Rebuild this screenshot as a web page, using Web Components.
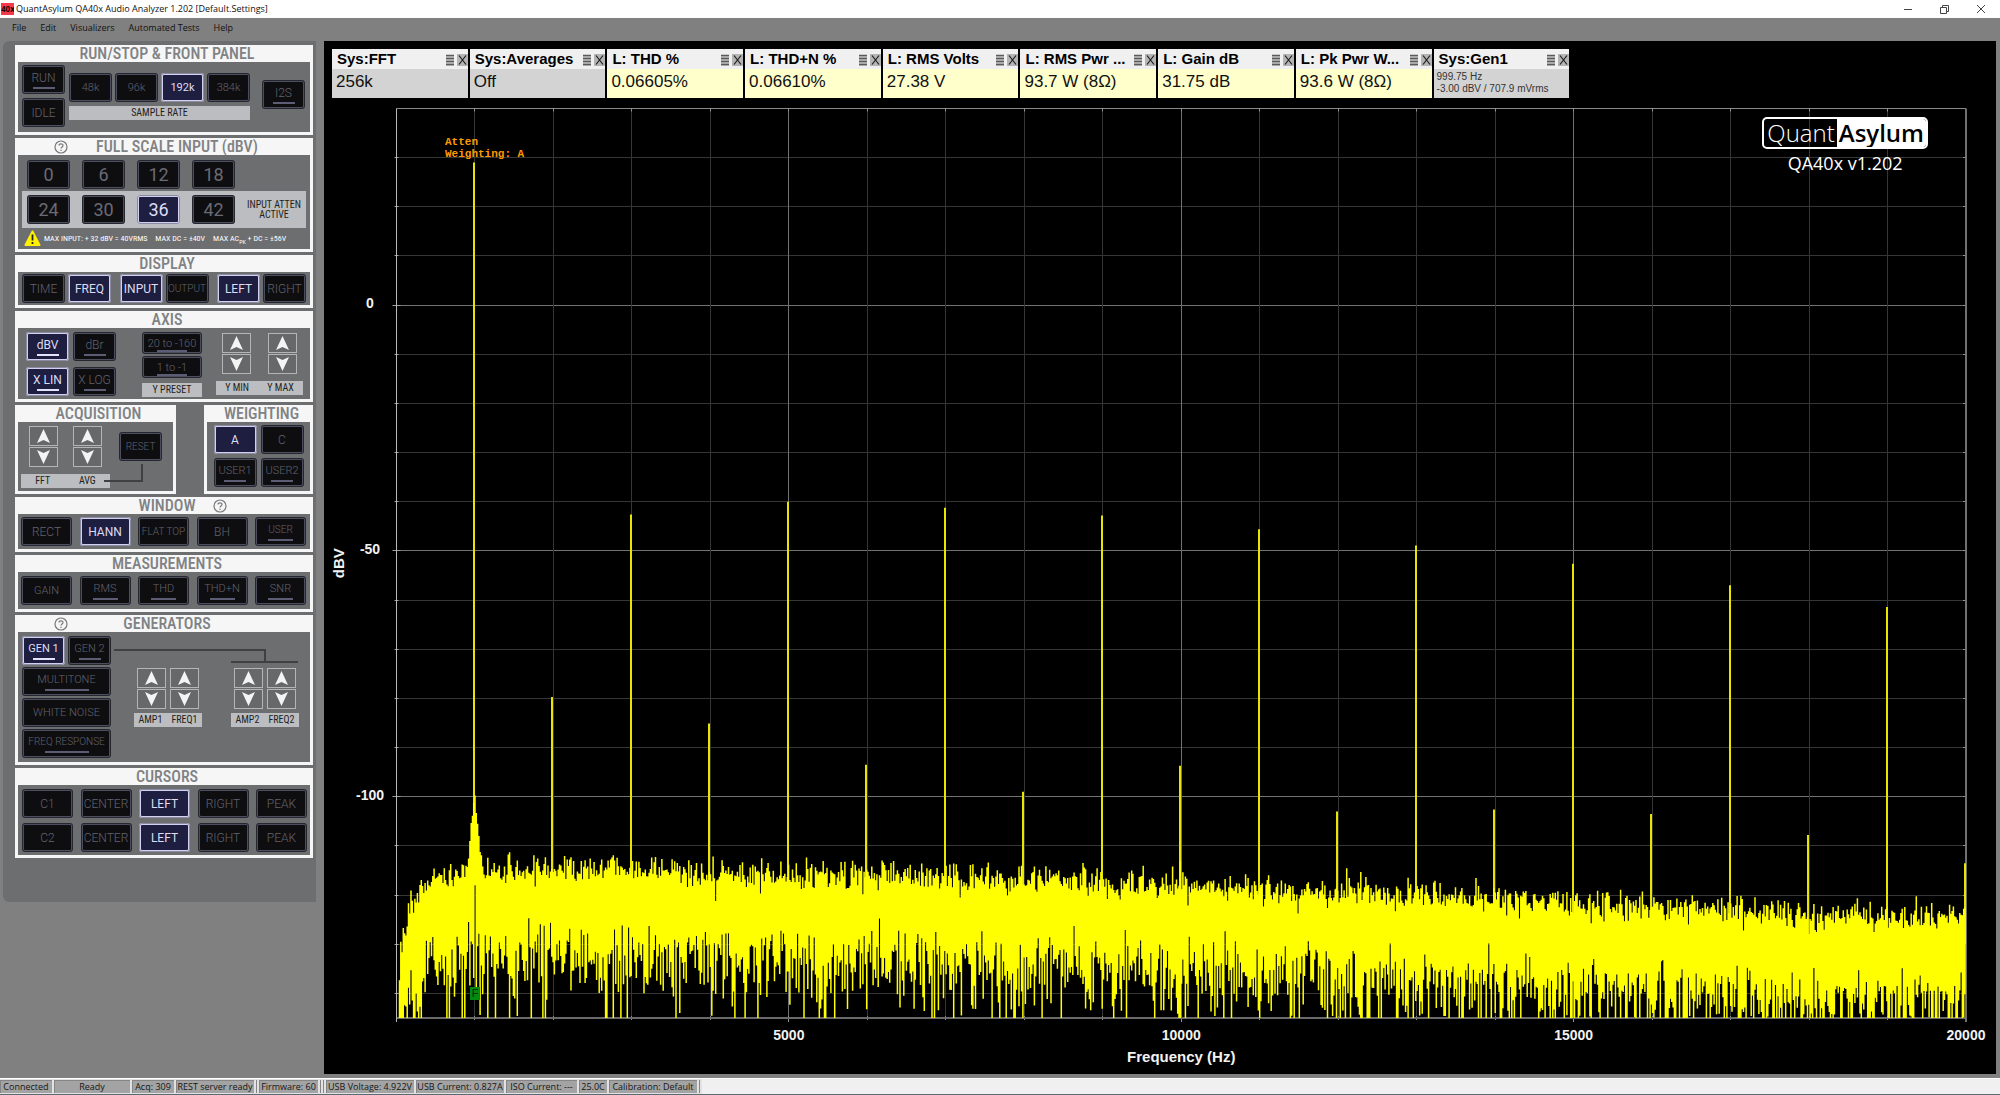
<!DOCTYPE html>
<html lang="en">
<head>
<meta charset="utf-8">
<title>QuantAsylum QA40x Audio Analyzer</title>
<style>
  html, body { margin: 0; height: 100%; background: #808080; }
  body { font-family: "Open Sans", "Noto Sans", sans-serif; color: #111; }
</style>
</head>
<body>
<qa-app></qa-app>

<script>
const NARROW = '"Liberation Sans Narrow", "Roboto Condensed", "Open Sans Condensed", "DejaVu Sans Condensed", sans-serif';

class Base extends HTMLElement {
  connectedCallback() {
    if (this.shadowRoot) return;
    this.attachShadow({ mode: 'open' }).innerHTML = this.view();
    this.ready();
  }
  ready() {}
  get(name, fallback = '') { return this.getAttribute(name) ?? fallback; }
}

/* A backlit front panel key */
customElements.define('qa-key', class extends Base {
  view() {
    return `<style>
      :host { display: block; flex: none; width: 43px; height: 29px; }
      :host([wide]) { width: 51px; }
      :host([full]) { width: 89px; }
      :host([flat]) { width: 60px; height: 22px; }
      button { box-sizing: border-box; width: 100%; height: 100%; padding: 0; margin: 0;
        display: flex; flex-direction: column; align-items: center; justify-content: center; gap: 2px;
        border: 2px solid #4d4d60; border-radius: 3px; outline: 1px solid #26262f; outline-offset: -1px;
        background: #0e0e10; color: #62626e; white-space: nowrap;
        font: 300 12px/14px Roboto, sans-serif; }
      :host([size="s"]) button { font-size: 10px; }
      :host([size="m"]) button { font-size: 11px; }
      :host([size="l"]) button { font-size: 18px; line-height: 20px; color: #6a6a74; font-weight: 400; }
      :host([flat]) button { gap: 0; font-size: 11px; line-height: 13px; justify-content: flex-end; }
      i { width: 22px; height: 2px; background: #5c5c74; }
      :host([wide]) i { width: 25px; }
      :host([full]) i { width: 44px; }
      :host([flat]) i { width: 30px; }
      :host([on]) button { background: #1e1e40; color: #dcdcf4; border-color: #d3d0f2; outline-color: #8a8aa0; font-weight: 400; }
      :host([on]) i { background: #e4e2fb; }
    </style><button type="button" aria-pressed="${this.hasAttribute('on')}"><slot></slot>${this.hasAttribute('bar') ? '<i></i>' : ''}</button>`;
  }
});

/* Up / down stepper */
customElements.define('qa-step', class extends Base {
  view() {
    return `<style>
      :host { display: flex; flex: none; flex-direction: column; gap: 1px; width: 29px; }
      button { box-sizing: border-box; height: 20px; padding: 0; border: 1px solid #b4b5b7; background: #67686a; display: grid; place-items: center; }
      svg { display: block; }
    </style>
    <button type="button" aria-label="${this.get('name')} up"><svg width="13" height="14" viewBox="0 0 13 14"><path d="M6.5 0 13 14 6.5 11 0 14Z" fill="#f4f4f4"/></svg></button>
    <button type="button" aria-label="${this.get('name')} down"><svg width="13" height="14" viewBox="0 0 13 14"><path d="M6.5 14 13 0 6.5 3 0 0Z" fill="#f4f4f4"/></svg></button>`;
  }
});

/* Grey caption under a group of keys */
customElements.define('qa-strip', class extends Base {
  view() {
    return `<style>
      :host { display: flex; flex: none; justify-content: space-around; align-items: center; height: 14px; background: #bcbdc0;
        color: #1f1f21; font: 10px/14px ${NARROW}; white-space: nowrap; }
    </style><slot></slot>`;
  }
});

/* Framed module with a heading */
customElements.define('qa-panel', class extends Base {
  view() {
    const mark = '<button type="button" aria-label="Help"><svg width="14" height="14" viewBox="0 0 14 14" fill="none" stroke="#77787b" stroke-width="1.2"><circle cx="7" cy="7" r="6"/><path d="M5 5.6C5 3.2 9 3.2 9 5.5 9 7 7 7 7 8.6M7 9.8V11"/></svg></button>';
    const help = this.get('help');
    return `<style>
      :host { display: block; border: solid #f6f6f6; border-width: 0 3px 3px; background: #6d6e70; }
      header { display: grid; grid-template-columns: 1fr auto 1fr; align-items: center; height: 17px; background: #f6f6f6; }
      h2 { grid-column: 2; grid-row: 1; margin: 0; padding-left: 6px; font: 500 16px/17px ${NARROW}; color: #808285; white-space: nowrap; }
      :host([offset]) h2 { padding-left: 26px; }
      button { grid-row: 1; padding: 0; border: 0; background: none; height: 14px; width: 14px; }
      .before { grid-column: 1; margin-left: 36px; }
      .after { grid-column: 3; margin-left: 18px; }
      button svg { display: block; }
    </style>
    <header>${help ? mark.replace('<button', `<button class="${help}"`) : ''}<h2>${this.get('heading').replace('&', '&amp;')}</h2></header>
    <slot></slot>`;
  }
});

/* Left hand control column */
customElements.define('qa-controls', class extends Base {
  view() {
    return `<style>
      :host { box-sizing: border-box; display: flex; flex: none; flex-direction: column; gap: 3px; align-self: flex-start; width: 313px;
        padding: 4px 3px 44px 12px; background: #6d6e70; border-radius: 6px 0 0 6px; }
      .row { display: flex; }
      .col { display: flex; flex-direction: column; }
      .g3 { gap: 3px; } .g4 { gap: 4px; } .g12 { gap: 12px; }
      .between { justify-content: space-between; }
      .run { padding: 3px 5px 5px 4px; align-items: flex-start; gap: 4px; }
      .rates { padding-top: 8px; gap: 4px; }
      .i2s { margin-left: auto; padding-top: 15px; }
      .scale1 { padding: 5px 9px 2px; }
      .scale2 { margin: 0 4px; padding: 4px 5px; background: #bcbdc0; align-items: center; }
      .scale2 p { flex: 1; margin: 0; text-align: center; white-space: nowrap; font: 10px/10px ${NARROW}; color: #1f1f21; }
      .warn { align-items: center; gap: 3px; height: 21px; padding: 0 6px; color: #fff; font: 8px/10px ${NARROW}; white-space: nowrap; }
      .warn span { margin-right: 5px; }
      .warn small { font-size: 6px; vertical-align: sub; line-height: 1px; }
      .display { padding: 2px 4px 2px; }
      .axis { padding: 4px 7px 2px 8px; }
      .axis .keys { display: grid; grid-template-columns: 43px 43px; gap: 5px 4px; }
      .axis .preset { width: 60px; margin-left: 26px; gap: 2px; }
      .axis .range { width: 88px; margin-left: 14px; }
      .steps { justify-content: space-between; }
      .axis .steps { padding: 1px 6px 7px; }
      .axis .preset qa-strip { margin-top: 3px; }
      .pair { justify-content: space-between; }
      .pair > * { box-sizing: border-box; width: 161px; }
      .pair > :last-child { width: 109px; }
      .acq { padding: 4px 11px 3px 3px; align-items: flex-start; }
      .acq .left { width: 89px; }
      .acq .steps { padding: 0 8px 7px; }
      .acq .reset { flex: 1; align-items: flex-end; padding-top: 6px; }
      .acq svg { align-self: flex-start; display: block; margin-left: -6px; }
      .weight { display: grid; grid-template-columns: 43px 43px; justify-content: center; gap: 4px; padding: 3px 0 4px; }
      .window { padding: 3px 4px 3px 3px; }
      .measure { padding: 4px 4px 4px 3px; }
      .gen { padding: 4px 0 4px 4px; align-items: flex-start; }
      .gen .left { gap: 2px; width: 89px; }
      .gen .right { flex: 1; }
      .gen .right svg { display: block; }
      .pairs { gap: 29px; padding: 0 0 0 23px; }
      .pairs .steps { padding: 0 3px 4px; }
      .pairs .col { width: 68px; }
      .cursor { padding: 4px 3px 3px 4px; gap: 5px; }
    </style>
    <qa-panel heading="RUN/STOP & FRONT PANEL">
      <div class="row run">
        <div class="col g4"><qa-key bar>RUN</qa-key><qa-key>IDLE</qa-key></div>
        <div class="col rates">
          <div class="row g3"><qa-key size="m">48k</qa-key><qa-key size="m">96k</qa-key><qa-key size="m" on>192k</qa-key><qa-key size="m">384k</qa-key></div>
          <qa-strip>SAMPLE RATE</qa-strip>
        </div>
        <div class="i2s"><qa-key bar>I2S</qa-key></div>
      </div>
    </qa-panel>
    <qa-panel heading="FULL SCALE INPUT (dBV)" help="before" offset>
      <div class="row g12 scale1"><qa-key size="l">0</qa-key><qa-key size="l">6</qa-key><qa-key size="l">12</qa-key><qa-key size="l">18</qa-key></div>
      <div class="row g12 scale2"><qa-key size="l">24</qa-key><qa-key size="l">30</qa-key><qa-key size="l" on>36</qa-key><qa-key size="l">42</qa-key><p>INPUT ATTEN<br>ACTIVE</p></div>
      <div class="row warn">
        <svg width="17" height="17" viewBox="0 0 17 17"><path d="M8.5 1.5 15.5 15H1.5Z" fill="#fff200" stroke="#fff200" stroke-width="2" stroke-linejoin="round"/><path d="M8.5 4.5V10.5M8.5 12V14" stroke="#222" stroke-width="1.8"/></svg>
        <span>MAX INPUT: + 32 dBV = 40VRMS</span><span>MAX DC = ±40V</span><span>MAX AC<small>PK</small> + DC = ±56V</span>
      </div>
    </qa-panel>
    <qa-panel heading="DISPLAY">
      <div class="row between display">
        <div class="row g3"><qa-key>TIME</qa-key><qa-key on>FREQ</qa-key></div>
        <div class="row g3"><qa-key on>INPUT</qa-key><qa-key size="s">OUTPUT</qa-key></div>
        <div class="row g3"><qa-key on>LEFT</qa-key><qa-key>RIGHT</qa-key></div>
      </div>
    </qa-panel>
    <qa-panel heading="AXIS">
      <div class="row axis">
        <div class="keys"><qa-key bar on>dBV</qa-key><qa-key bar>dBr</qa-key><qa-key bar on>X LIN</qa-key><qa-key bar>X LOG</qa-key></div>
        <div class="col preset"><qa-key flat bar>20 to -160</qa-key><qa-key flat bar>1 to -1</qa-key><qa-strip>Y PRESET</qa-strip></div>
        <div class="col range">
          <div class="row steps"><qa-step name="Y min"></qa-step><qa-step name="Y max"></qa-step></div>
          <qa-strip><span>Y MIN</span><span>Y MAX</span></qa-strip>
        </div>
      </div>
    </qa-panel>
    <div class="row pair">
      <qa-panel heading="ACQUISITION">
        <div class="row acq">
          <div class="col left">
            <div class="row steps"><qa-step name="FFT"></qa-step><qa-step name="Average"></qa-step></div>
            <qa-strip><span>FFT</span><span>AVG</span></qa-strip>
          </div>
          <div class="col reset"><qa-key size="s">RESET</qa-key>
            <svg width="40" height="24" viewBox="0 0 40 24" fill="none" stroke="#3f4042" stroke-width="2"><path d="M0 20H38V3"/></svg></div>
        </div>
      </qa-panel>
      <qa-panel heading="WEIGHTING">
        <div class="weight"><qa-key on>A</qa-key><qa-key>C</qa-key><qa-key size="m" bar>USER1</qa-key><qa-key size="m" bar>USER2</qa-key></div>
      </qa-panel>
    </div>
    <qa-panel heading="WINDOW" help="after">
      <div class="row between window"><qa-key wide>RECT</qa-key><qa-key wide on>HANN</qa-key><qa-key wide size="s">FLAT TOP</qa-key><qa-key wide>BH</qa-key><qa-key wide size="s" bar>USER</qa-key></div>
    </qa-panel>
    <qa-panel heading="MEASUREMENTS">
      <div class="row between measure"><qa-key wide size="m">GAIN</qa-key><qa-key wide size="m" bar>RMS</qa-key><qa-key wide size="m" bar>THD</qa-key><qa-key wide size="m" bar>THD+N</qa-key><qa-key wide size="m" bar>SNR</qa-key></div>
    </qa-panel>
    <qa-panel heading="GENERATORS" help="before">
      <div class="row gen">
        <div class="col left">
          <div class="row g3"><qa-key size="m" bar on>GEN 1</qa-key><qa-key size="m" bar>GEN 2</qa-key></div>
          <qa-key full size="m" bar>MULTITONE</qa-key><qa-key full size="m">WHITE NOISE</qa-key><qa-key full size="s" bar>FREQ RESPONSE</qa-key>
        </div>
        <div class="col right">
          <svg width="190" height="32" viewBox="0 0 190 32" fill="none" stroke="#3f4042" stroke-width="2"><path d="M3 14H154V26M120 26H187"/></svg>
          <div class="row pairs">
            <div class="col"><div class="row steps"><qa-step name="Amp 1"></qa-step><qa-step name="Freq 1"></qa-step></div><qa-strip><span>AMP1</span><span>FREQ1</span></qa-strip></div>
            <div class="col"><div class="row steps"><qa-step name="Amp 2"></qa-step><qa-step name="Freq 2"></qa-step></div><qa-strip><span>AMP2</span><span>FREQ2</span></qa-strip></div>
          </div>
        </div>
      </div>
    </qa-panel>
    <qa-panel heading="CURSORS">
      <div class="col cursor">
        <div class="row between"><qa-key wide>C1</qa-key><qa-key wide>CENTER</qa-key><qa-key wide on>LEFT</qa-key><qa-key wide>RIGHT</qa-key><qa-key wide>PEAK</qa-key></div>
        <div class="row between"><qa-key wide>C2</qa-key><qa-key wide>CENTER</qa-key><qa-key wide on>LEFT</qa-key><qa-key wide>RIGHT</qa-key><qa-key wide>PEAK</qa-key></div>
      </div>
    </qa-panel>`;
  }
});

/* Readout card */
customElements.define('qa-meter', class extends Base {
  view() {
    return `<style>
      :host { display: flex; flex-direction: column; height: 49px; min-width: 0; background: #ffffcc; color: #111; font: 17px/24px "Liberation Sans", sans-serif; white-space: nowrap; }
      :host([sys]) { background: #d3d3d3; }
      :host([small]) { font-size: 10px; line-height: 12px; color: #333; }
      header { display: flex; align-items: center; height: 20px; padding-left: 5px; background: #f0f0f0; gap: 1px; }
      h3 { flex: 1; margin: 0; font: bold 15px/20px "Liberation Sans", sans-serif; color: #000; }
      button { box-sizing: border-box; flex: none; width: 11px; height: 13px; padding: 0; border: 0; background: none; }
      button svg { display: block; }
      div { padding: 1px 4px; }
      :host([small]) div { padding: 2px 3px; }
    </style>
    <header><h3>${this.get('name')}</h3>
      <button type="button" aria-label="Menu"><svg width="11" height="13" viewBox="0 0 11 13"><path fill="#c4c4c4" d="M1 2H9V13H1Z"/><path d="M1 2.5H9M1 5.5H9M1 8.5H9M1 11.5H9" stroke="#5a5a5a" stroke-width="1.4"/></svg></button>
      <button type="button" aria-label="Close"><svg width="11" height="13" viewBox="0 0 11 13"><path fill="#b4b4b4" d="M0 1H11V13H0Z"/><path d="M2 2.5 9 11.5M9 2.5 2 11.5" stroke="#1c1c1c" stroke-width="1.2"/></svg></button></header>
    <div><slot></slot></div>`;
  }
});

customElements.define('qa-logo', class extends Base {
  view() {
    return `<style>
      :host { display: flex; flex-direction: column; align-items: center; color: #fff; font: 18px/24px "Open Sans", sans-serif; }
      .mark { display: flex; border: 2px solid #fff; border-radius: 5px; overflow: hidden; font-size: 24px; line-height: 28px; margin-bottom: 2px; }
      .mark span { padding: 0 2px 0 3px; font-weight: 300; }
      .mark b { padding: 0 2px; background: #fff; color: #000; font-weight: 600; }
    </style><div class="mark"><span>Quant</span><b>Asylum</b></div><div><slot></slot></div>`;
  }
});

/* Spectrum plot: grid, harmonics and noise floor */
customElements.define('qa-spectrum', class extends Base {
  view() {
    return `<style>
      :host { display: block; min-height: 0; overflow: hidden; }
      svg { display: block; width: 100%; height: 100%; }
      text { fill: #f2f2f2; font: bold 14px "Liberation Sans", sans-serif; text-anchor: middle; }
      .name { font-size: 15px; }
      .note { fill: #ff9900; font: bold 11px "Liberation Mono", monospace; text-anchor: start; }
      .flag { fill: #002800; font-weight: normal; font-size: 11px; }
    </style><svg role="img" aria-label="Spectrum"></svg>`;
  }
  ready() {
    this.draw();
    new ResizeObserver(() => this.draw()).observe(this);
  }
  draw() {
    const w = this.clientWidth, h = this.clientHeight;
    if (!w || !h) return;
    const L = 72.5, T = 10.5, R = w - 30, B = h - 56;
    const X = f => L + f / 20000 * (R - L);
    const Y = d => T + (40 - d) / 185 * (B - T);
    const snap = v => Math.floor(v) + 0.5;
    const line = (x1, y1, x2, y2, c, s = 1) => `<path d="M${x1} ${y1}L${x2} ${y2}" stroke="${c}" stroke-width="${s}"/>`;
    let out = '';
    for (let d = 30; d > -145; d -= 10) {
      const major = d % 50 === 0, y = snap(Y(d));
      out += line(L, y, R, y, major ? '#727272' : '#363636');
      out += line(L - (major ? 4 : 2), y, L + (major ? 4 : 2), y, '#a0a0a0') + line(R - 3, y, R, y, '#909090');
    }
    for (let f = 1000; f < 20000; f += 1000) {
      const major = f % 5000 === 0, x = snap(X(f));
      out += line(x, T, x, B, major ? '#727272' : '#363636');
      out += line(x, T, x, T + 3, '#909090') + line(x, B - 2, x, B + (major ? 4 : 2), '#909090');
    }
    out += line(L, T, R, T, '#8a8a8a') + line(L, B, R, B, '#6a6a6a', 2) + line(R, T, R, B + 4, '#707070', 2) + line(L, T, L, B + 4, '#b8b8b8');

    let seed = 20231;
    const rnd = () => { seed = (seed * 1664525 + 1013904223) >>> 0; return (seed + 1) / 4294967297; };
    const floor = [[0, -150], [40, -141], [80, -134], [150, -128.5], [280, -125], [430, -122.6], [700, -120.6], [940, -119.2], [1060, -119.4],
      [5400, -120.7], [8000, -121.8], [11000, -123.6], [14000, -126], [20000, -129.8]];
    const level = f => {
      let i = 1;
      while (i < floor.length - 1 && floor[i][0] < f) i++;
      const [a, b] = [floor[i - 1], floor[i]];
      return a[1] + (b[1] - a[1]) * (f - a[0]) / (b[0] - a[0]);
    };
    const step = 1.28;
    let noise = '';
    for (let x = L + 3; x < R - 1; x += step) {
      const f = (x - L) / (R - L) * 20000, m = level(f);
      let hi = -1e9, lo = 1e9;
      for (let k = 0; k < 16; k++) {
        const v = m + 10 * Math.log10(-Math.log(rnd()));
        hi = Math.max(hi, v); lo = Math.min(lo, v);
      }
      const dist = Math.abs(f - 995);
      if (dist < 110) hi = Math.max(hi, -97 - dist * 0.17 - rnd() * 3);
      if (dist < 10) lo = -118;
      if (hi < -145) continue;
      noise += `M${x.toFixed(1)} ${Y(hi).toFixed(1)}V${Math.min(B, Y(lo)).toFixed(1)}`;
    }

    const peaks = [29, -79.7, -42.6, -85.1, -40, -93.5, -41.2, -99, -42.8, -93.7, -45.6, -103, -48.9, -102.6, -52.6, -103.5, -57, -107.8, -61.4, -113.5];
    peaks.forEach((p, i) => {
      const x = Math.round(X((i + 1) * 1000) - 1), end = Y(i ? -130 : -114);
      out += line(x, Y(p), x, end, '#e6e600', 2);
    });
    out += `<path d="${noise}" stroke="#ffff00" stroke-width="1.5"/>`;

    for (const f of [5000, 10000, 15000, 20000]) out += `<text x="${X(f)}" y="${B + 22}">${f}</text>`;
    for (const d of [0, -50, -100]) out += `<text x="46" y="${Y(d) + 3}">${d}</text>`;
    out += `<text class="name" x="${(L + R) / 2}" y="${B + 44}">Frequency (Hz)</text>`;
    out += `<text class="name" transform="translate(20 ${(T + B) / 2}) rotate(-90)">dBV</text>`;
    out += `<text class="note" x="121" y="47">Atten</text><text class="note" x="121" y="59">Weighting: A</text>`;
    const mx = Math.round(X(1000)), my = Math.round(Y(-140));
    out += `<rect x="${mx - 5}" y="${my - 6}" width="10" height="13" fill="#008a10"/><text class="flag" x="${mx}" y="${my + 4}">F</text>`;
    this.shadowRoot.querySelector('svg').innerHTML = out;
  }
});

customElements.define('qa-chart', class extends Base {
  view() {
    return `<style>
      :host { position: relative; display: flex; flex: 1; flex-direction: column; min-width: 0; background: #000; }
      .meters { display: grid; grid-template-columns: repeat(9, 1fr); gap: 2px; width: 74%; padding: 8px 8px 0; }
      qa-spectrum { flex: 1; }
      qa-logo { position: absolute; top: 76px; right: 68px; }
    </style>
    <div class="meters">
      <qa-meter sys name="Sys:FFT">256k</qa-meter>
      <qa-meter sys name="Sys:Averages">Off</qa-meter>
      <qa-meter name="L: THD %">0.06605%</qa-meter>
      <qa-meter name="L: THD+N %">0.06610%</qa-meter>
      <qa-meter name="L: RMS Volts">27.38 V</qa-meter>
      <qa-meter name="L: RMS Pwr ...">93.7 W (8Ω)</qa-meter>
      <qa-meter name="L: Gain dB">31.75 dB</qa-meter>
      <qa-meter name="L: Pk Pwr W...">93.6 W (8Ω)</qa-meter>
      <qa-meter sys small name="Sys:Gen1">999.75 Hz<br>-3.00 dBV / 707.9 mVrms</qa-meter>
    </div>
    <qa-spectrum></qa-spectrum>
    <qa-logo>QA40x v1.202</qa-logo>`;
  }
});

customElements.define('qa-titlebar', class extends Base {
  view() {
    return `<style>
      :host { display: flex; flex: none; align-items: center; height: 18px; padding: 0 12px 0 1px; gap: 2px; background: #fff; color: #111; font: 9px/18px "Open Sans", sans-serif; }
      b { width: 13px; height: 12px; background: #f5394a; color: #200; font: bold 8px/12px "Open Sans", sans-serif; text-align: center; overflow: hidden; }
      h1 { flex: 1; margin: 0; font: inherit; }
      nav { display: flex; gap: 21px; }
      button { width: 15px; height: 15px; padding: 0; border: 0; background: none; }
      svg { display: block; fill: none; stroke: #444; }
    </style>
    <b>40x</b><h1><slot></slot></h1>
    <nav>
      <button type="button" aria-label="Minimize"><svg width="15" height="15"><path d="M3 7.5H11"/></svg></button>
      <button type="button" aria-label="Restore"><svg width="15" height="15"><path d="M3.5 5.5H9.5V11.5H3.5ZM5.5 5V3.5H11.5V9.5H10"/></svg></button>
      <button type="button" aria-label="Close"><svg width="15" height="15"><path d="M4 3 12 11M12 3 4 11"/></svg></button>
    </nav>`;
  }
});

customElements.define('qa-menubar', class extends Base {
  view() {
    return `<style>
      :host { display: flex; flex: none; height: 23px; padding: 0 12px; gap: 14px; }
      button { height: 19px; padding: 0; border: 0; background: none; color: #111; font: 9px/19px "Open Sans", sans-serif; }
    </style>${this.get('items').split(',').map(t => `<button type="button">${t}</button>`).join('')}`;
  }
});

customElements.define('qa-statusbar', class extends Base {
  view() {
    return `<style>
      :host { display: flex; flex: none; height: 15px; background: #f0f0f0; border-top: 1px solid #fff; border-bottom: 1px solid #5a6a74; }
      ::slotted(span) { box-sizing: border-box; height: 15px; background: #a3a3a3; border: solid #e2e2e2; border-width: 1px 2px 1px 0; box-shadow: inset 1px 1px #858585;
        color: #151515; font: 9px/14px "Open Sans", sans-serif; text-align: center; white-space: nowrap; flex: none; }
    </style><slot></slot>`;
  }
});

customElements.define('qa-app', class extends Base {
  view() {
    return `<style>
      :host { display: flex; flex-direction: column; min-height: 100vh; background: #808080; }
      main { display: flex; flex: 1; gap: 8px; padding: 0 4px 4px 3px; }
      .w3 { width: 3px; } .w30 { width: 30px; } .w44 { width: 44px; } .w54 { width: 54px; } .w61 { width: 61px; }
      .w73 { width: 73px; } .w78 { width: 78px; } .w80 { width: 80px; } .w90 { width: 90px; }
    </style>
    <qa-titlebar>QuantAsylum QA40x Audio Analyzer 1.202 [Default.Settings]</qa-titlebar>
    <qa-menubar items="File,Edit,Visualizers,Automated Tests,Help"></qa-menubar>
    <main><qa-controls></qa-controls><qa-chart></qa-chart></main>
    <qa-statusbar>
      <span class="w54">Connected</span><span class="w78">Ready</span><span class="w44">Acq: 309</span><span class="w80">REST server ready</span><span class="w3"></span><span class="w61">Firmware: 60</span><span class="w3"></span><span class="w3"></span><span class="w90">USB Voltage: 4.922V</span><span class="w90">USB Current: 0.827A</span><span class="w73">ISO Current: ---</span><span class="w30">25.0C</span><span class="w90">Calibration: Default</span><span class="w3"></span>
    </qa-statusbar>`;
  }
});
</script>
</body>
</html>
